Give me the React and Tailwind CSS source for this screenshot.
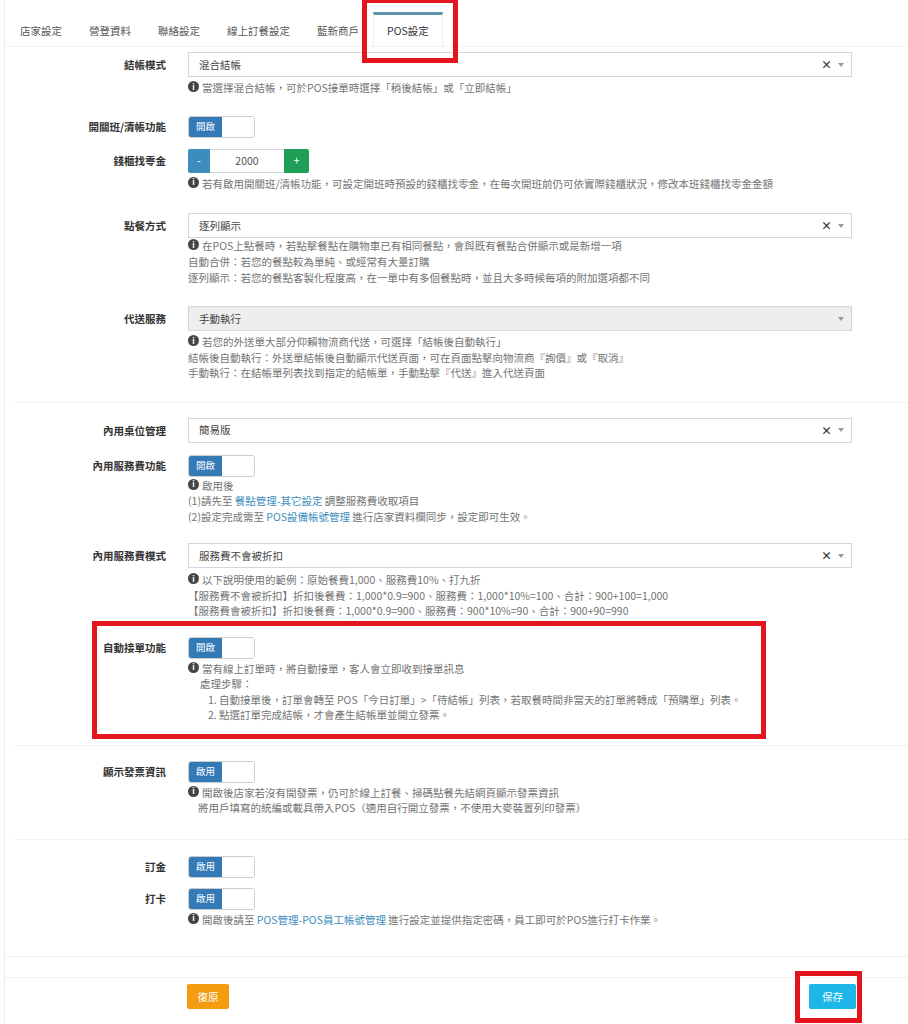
import React from "react";

const tabs = ["店家設定", "營登資料", "聯絡設定", "線上訂餐設定", "藍新商戶", "POS設定"];

const InfoIcon = () => (
  <span className="mr-[3px] inline-flex h-[11px] w-[11px] translate-y-[1px] items-center justify-center rounded-full bg-[#444] align-top text-[8px] font-bold leading-none text-white">
    i
  </span>
);

const Link = ({ children }) => <span className="text-[#3c8dbc]">{children}</span>;

const Help = ({ children, className = "" }) => (
  <div className={`text-[10.5px] leading-[15.5px] text-[#737373] ${className}`}>{children}</div>
);

const Row = ({ label, labelLh = "leading-[25px]", children, className = "" }) => (
  <div className={`flex items-start ${className}`}>
    <div className={`w-[161px] shrink-0 text-right text-[10.5px] font-bold text-[#333] ${labelLh}`}>
      {label}
    </div>
    <div className="ml-[22px] w-[664px]">{children}</div>
  </div>
);

const Caret = () => (
  <span className="inline-block h-0 w-0 border-x-[3px] border-t-[4px] border-x-transparent border-t-[#999]" />
);

const Select = ({ value, disabled = false }) => (
  <div
    className={`flex h-[25px] items-center border border-[#d2d6de] pl-[10px] pr-[7px] ${
      disabled ? "bg-[#eeeeee]" : "bg-white"
    }`}
  >
    <span className="flex-1 text-[10.5px] text-[#444]">{value}</span>
    {!disabled && <span className="mr-[6px] text-[11px] font-bold leading-none text-[#333]">×</span>}
    <Caret />
  </div>
);

const Toggle = ({ text = "開啟" }) => (
  <div className="flex h-[22px] w-[67px] overflow-hidden rounded-[3px] border border-[#ccc]">
    <div className="flex w-[33px] items-center justify-center bg-[#337ab7] text-[9.5px] text-white">{text}</div>
    <div className="flex-1 bg-white" />
  </div>
);

const Hr = ({ className = "" }) => <div className={`border-t border-[#f0f0f0] ${className}`} />;

export default function App() {
  return (
    <div className="relative h-[1024px] w-[908px] overflow-hidden bg-white font-['Noto_Sans_CJK_TC','Noto_Sans',sans-serif]">
      <div className="ml-[4px] h-full border-l border-[#ececec]">
        {/* tabs */}
        <div className="flex border-b border-[#f4f4f4] pl-[2px] pt-[12px]">
          {tabs.map((t) => {
            const active = t === "POS設定";
            return (
              <div
                key={t}
                className={`mr-[1px] flex h-[34px] items-center px-[13px] text-[10.5px] ${
                  active
                    ? "border-x border-t-[3px] border-x-[#f0f0f0] border-t-[#5e93ab] bg-white text-[#333]"
                    : "border-t-[3px] border-t-transparent text-[#555]"
                }`}
              >
                {t}
              </div>
            );
          })}
        </div>

        <Row label="結帳模式" className="mt-[5px]">
          <Select value="混合結帳" />
          <Help className="mt-[3px]">
            <InfoIcon />當選擇混合結帳，可於POS接單時選擇「稍後結帳」或「立即結帳」
          </Help>
        </Row>

        <Row label="開關班/清帳功能" labelLh="leading-[22px]" className="mt-[20px]">
          <Toggle />
        </Row>

        <Row label="錢櫃找零金" labelLh="leading-[24px]" className="mt-[11px]">
          <div className="flex h-[24px]">
            <div className="flex w-[22px] items-center justify-center rounded-l-[2px] bg-[#3c8dbc] text-[11px] text-white">-</div>
            <div className="flex w-[74px] items-center justify-center border-y border-[#d2d6de] text-[10.5px] text-[#555]">2000</div>
            <div className="flex w-[25px] items-center justify-center rounded-r-[2px] bg-[#1e9e57] text-[11px] text-white">+</div>
          </div>
          <Help className="mt-[3px]">
            <InfoIcon />若有啟用開關班/清帳功能，可設定開班時預設的錢櫃找零金，在每次開班前仍可依實際錢櫃狀況，修改本班錢櫃找零金金額
          </Help>
        </Row>

        <Row label="點餐方式" className="mt-[22px]">
          <Select value="逐列顯示" />
          <Help className="mt-[0px] leading-[16px]">
            <div>
              <InfoIcon />在POS上點餐時，若點擊餐點在購物車已有相同餐點，會與既有餐點合併顯示或是新增一項
            </div>
            <div>自動合併：若您的餐點較為單純、或經常有大量訂購</div>
            <div>逐列顯示：若您的餐點客製化程度高，在一單中有多個餐點時，並且大多時候每項的附加選項都不同</div>
          </Help>
        </Row>

        <Row label="代送服務" className="mt-[20px]">
          <Select value="手動執行" disabled />
          <Help className="mt-[3px]">
            <div>
              <InfoIcon />若您的外送單大部分仰賴物流商代送，可選擇「結帳後自動執行」
            </div>
            <div>結帳後自動執行：外送單結帳後自動顯示代送頁面，可在頁面點擊向物流商『詢價』或『取消』</div>
            <div>手動執行：在結帳單列表找到指定的結帳單，手動點擊『代送』進入代送頁面</div>
          </Help>
        </Row>

        <Hr className="ml-[10px] mt-[21px]" />

        <Row label="內用桌位管理" className="mt-[15px]">
          <Select value="簡易版" />
        </Row>

        <Row label="內用服務費功能" labelLh="leading-[22px]" className="mt-[12px]">
          <Toggle />
          <Help className="mt-[1px]">
            <div>
              <InfoIcon />啟用後
            </div>
            <div>
              (1)請先至 <Link>餐點管理-其它設定</Link> 調整服務費收取項目
            </div>
            <div>
              (2)設定完成需至 <Link>POS設備帳號管理</Link> 進行店家資料欄同步，設定即可生效。
            </div>
          </Help>
        </Row>

        <Row label="內用服務費模式" className="mt-[19px]">
          <Select value="服務費不會被折扣" />
          <Help className="mt-[4px]">
            <div>
              <InfoIcon />以下說明使用的範例：原始餐費1,000、服務費10%、打九折
            </div>
            <div>【服務費不會被折扣】折扣後餐費：1,000*0.9=900、服務費：1,000*10%=100、合計：900+100=1,000</div>
            <div>【服務費會被折扣】折扣後餐費：1,000*0.9=900、服務費：900*10%=90、合計：900+90=990</div>
          </Help>
        </Row>

        <Row label="自動接單功能" labelLh="leading-[22px]" className="mt-[18px]">
          <Toggle />
          <Help className="mt-[2px]">
            <div>
              <InfoIcon />當有線上訂單時，將自動接單，客人會立即收到接單訊息
            </div>
            <div className="pl-[12px]">處理步驟：</div>
            <div className="pl-[20px]">1. 自動接單後，訂單會轉至 POS「今日訂單」&gt;「待結帳」列表，若取餐時間非當天的訂單將轉成「預購單」列表。</div>
            <div className="pl-[20px]">2. 點選訂單完成結帳，才會產生結帳單並開立發票。</div>
          </Help>
        </Row>

        <Hr className="ml-[10px] mt-[22px]" />

        <Row label="顯示發票資訊" labelLh="leading-[22px]" className="mt-[15px]">
          <Toggle text="啟用" />
          <Help className="mt-[2px]">
            <div>
              <InfoIcon />開啟後店家若沒有開發票，仍可於線上訂餐、掃碼點餐先結網頁顯示發票資訊
            </div>
            <div className="pl-[10px]">將用戶填寫的統編或載具帶入POS（適用自行開立發票，不使用大麥裝置列印發票）</div>
          </Help>
        </Row>

        <Hr className="ml-[10px] mt-[23px]" />

        <Row label="訂金" labelLh="leading-[22px]" className="mt-[16px]">
          <Toggle text="啟用" />
        </Row>

        <Row label="打卡" labelLh="leading-[22px]" className="mt-[10px]">
          <Toggle text="啟用" />
          <Help className="mt-[2px]">
            <InfoIcon />開啟後請至 <Link>POS管理-POS員工帳號管理</Link> 進行設定並提供指定密碼，員工即可於POS進行打卡作業。
          </Help>
        </Row>

        <Hr className="ml-[1px] mt-[29px]" />
        <Hr className="mt-[20px]" />

        <div className="flex pt-[6px]">
          <div className="ml-[182px] flex h-[25px] w-[42px] items-center justify-center rounded-[2px] bg-[#f39c12] text-[10.5px] text-white">
            復原
          </div>
          <div className="ml-[580px] flex h-[25px] w-[47px] items-center justify-center rounded-[2px] bg-[#1cb6e9] text-[10.5px] text-white">
            保存
          </div>
        </div>
      </div>

      {/* red annotation boxes */}
      <div className="absolute left-[362px] top-[-2px] h-[65px] w-[96px] border-[5px] border-[#e3151f]" />
      <div className="absolute left-[92px] top-[621px] h-[118px] w-[674px] border-[5px] border-[#e3151f]" />
      <div className="absolute left-[795px] top-[971px] h-[52px] w-[67px] border-[5px] border-[#e3151f]" />
    </div>
  );
}
